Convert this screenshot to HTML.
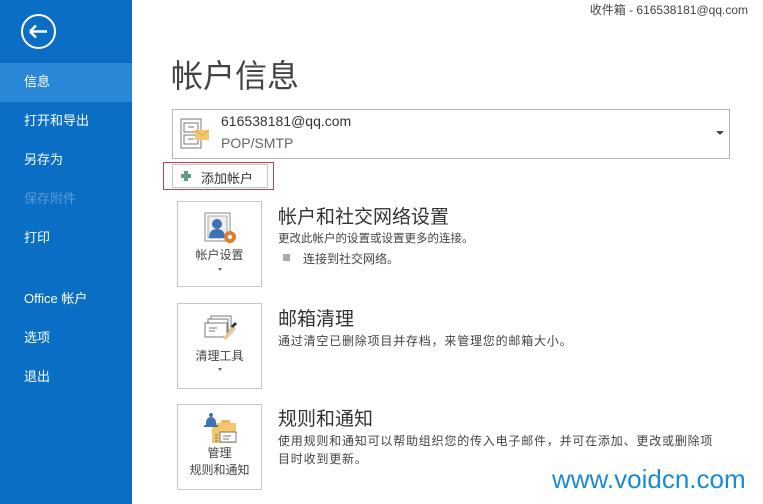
<!DOCTYPE html>
<html><head><meta charset="utf-8"><style>
*{margin:0;padding:0;box-sizing:border-box}
body{width:763px;height:504px;overflow:hidden;background:#fff;position:relative;font-family:"Liberation Sans","Noto Sans CJK SC",sans-serif;color:#444}
.side{position:absolute;left:0;top:0;width:132px;height:504px;background:#0a6fc4}
.sel{position:absolute;left:0;top:63px;width:132px;height:39px;background:#2b88d8}
.nav{position:absolute;left:24px;color:#fff;font-size:13px;line-height:16px}
.a{position:absolute;white-space:nowrap}
.card{position:absolute;left:177px;width:85px;height:86px;border:1px solid #c6c6c6;background:#fff;text-align:center;font-size:12px;color:#444}
.h{font-size:19px;color:#333;left:278px}
.d{font-size:12px;color:#444;left:278px}
</style></head><body>
<div class="side"></div>
<div class="sel"></div>
<svg style="position:absolute;left:20px;top:13px" width="37" height="37"><circle cx="18.5" cy="18.5" r="16.5" fill="none" stroke="#fff" stroke-width="2"/><path d="M10 18.5H27M10 18.5L16 12.5M10 18.5L16 24.5" stroke="#fff" stroke-width="2.4" fill="none"/></svg>
<div class="nav" style="top:74px">信息</div>
<div class="nav" style="top:113px">打开和导出</div>
<div class="nav" style="top:152px">另存为</div>
<div class="nav" style="top:191px;color:#5a9ad8">保存附件</div>
<div class="nav" style="top:230px">打印</div>
<div class="nav" style="top:291px">Office 帐户</div>
<div class="nav" style="top:330px">选项</div>
<div class="nav" style="top:369px">退出</div>

<div class="a" style="right:15px;top:1px;font-size:12px;color:#444">收件箱 - 616538181@qq.com</div>
<div class="a" style="left:171px;top:51px;font-size:32px;color:#444;letter-spacing:0px">帐户信息</div>

<div class="a" style="left:172px;top:109px;width:558px;height:50px;border:1px solid #b5b5b5"></div>
<svg class="a" style="left:180px;top:118px" width="30" height="32"><rect x="1" y="1" width="20" height="29" fill="#fff" stroke="#777"/><rect x="4" y="5" width="14" height="9" fill="none" stroke="#777"/><rect x="4" y="17" width="14" height="9" fill="none" stroke="#777"/><path d="M8 9h6M8 21h6" stroke="#777"/><rect x="15" y="12" width="14" height="10" fill="#f4c76c"/><path d="M15 12l7 5 7-5" stroke="#e0a940" fill="none"/></svg>
<div class="a" style="left:221px;top:113px;font-size:14px;color:#333">616538181@qq.com</div>
<div class="a" style="left:221px;top:135px;font-size:14px;color:#666">POP/SMTP</div>
<div class="a" style="left:716px;top:131px;width:0;height:0;border-left:4px solid transparent;border-right:4px solid transparent;border-top:4px solid #444"></div>

<div class="a" style="left:163px;top:162px;width:111px;height:28px;border:1px solid #c9424a"></div>
<div class="a" style="left:172px;top:164px;width:96px;height:24px;border:1px solid #c6c6c6"></div>
<div class="a" style="left:181px;top:171px;width:10px;height:10px"><div style="position:absolute;left:3px;top:0;width:4px;height:10px;background:#5d9b86"></div><div style="position:absolute;left:0;top:3px;width:10px;height:4px;background:#5d9b86"></div></div>
<div class="a" style="left:201px;top:168px;font-size:13px;color:#333">添加帐户</div>

<div class="card" style="top:201px">
<svg style="position:absolute;left:25px;top:10px" width="36" height="34"><rect x="2" y="1" width="25" height="28" fill="#fff" stroke="#888"/><rect x="5" y="4" width="19" height="22" fill="#eee" stroke="#aaa"/><circle cx="14" cy="12" r="5" fill="#3d72b4"/><path d="M6 26c0-7 4-9 8-9s8 2 8 9z" fill="#3d72b4"/><circle cx="27" cy="25" r="6" fill="#e07c2a"/><circle cx="27" cy="25" r="2.2" fill="#fff"/></svg>
<div style="position:absolute;left:0;right:0;top:44px">帐户设置</div>
<div style="position:absolute;left:40px;top:66px;border-left:2px solid transparent;border-right:2px solid transparent;border-top:3px solid #666"></div>
</div>
<div class="a h" style="top:202px">帐户和社交网络设置</div>
<div class="a d" style="top:230px;font-size:11.5px">更改此帐户的设置或设置更多的连接。</div>
<div class="a" style="left:283px;top:254px;width:7px;height:7px;background:#aaa"></div>
<div class="a" style="left:303px;top:250px;font-size:12px;color:#444">连接到社交网络。</div>

<div class="card" style="top:303px">
<svg style="position:absolute;left:25px;top:10px" width="36" height="32"><rect x="8" y="2" width="20" height="14" fill="#fff" stroke="#777"/><rect x="5" y="5" width="20" height="14" fill="#fff" stroke="#777"/><rect x="2" y="9" width="22" height="14" fill="#fff" stroke="#777"/><path d="M6 14h8M6 17h6" stroke="#777"/><path d="M20 24l10-12 3 3-10 11z" fill="#e8c898"/><path d="M28 12l4-4 2 2-4 4z" fill="#333"/></svg>
<div style="position:absolute;left:0;right:0;top:43px">清理工具</div>
<div style="position:absolute;left:40px;top:64px;border-left:2px solid transparent;border-right:2px solid transparent;border-top:3px solid #666"></div>
</div>
<div class="a h" style="top:304px">邮箱清理</div>
<div class="a d" style="top:332px;letter-spacing:0.8px">通过清空已删除项目并存档，来管理您的邮箱大小。</div>

<div class="card" style="top:404px">
<svg style="position:absolute;left:24px;top:6px" width="38" height="34"><path d="M10 12h24v20H10z" fill="#f4c76c"/><path d="M10 12h8l2-3h8v3" fill="#e9b85a"/><path d="M4 11a5 5 0 0 1 10 0v3H4z" fill="#3d72b4"/><rect x="2" y="14" width="14" height="2" fill="#3d72b4"/><circle cx="9" cy="4" r="2" fill="#3d72b4"/><rect x="18" y="21" width="16" height="10" fill="#fff" stroke="#777"/><path d="M21 25h8M21 28h6M13 24h3M13 27h3M13 30h3" stroke="#777"/></svg>
<div style="position:absolute;left:0;right:0;top:40px;line-height:17px">管理<br>规则和通知</div>
</div>
<div class="a h" style="top:404px">规则和通知</div>
<div class="a d" style="top:432px;line-height:18px;letter-spacing:0.8px">使用规则和通知可以帮助组织您的传入电子邮件，并可在添加、更改或删除项<br>目时收到更新。</div>

<div class="a" style="left:552px;top:464px;font-size:26px;color:#1a8ad6">www.voidcn.com</div>
</body></html>
